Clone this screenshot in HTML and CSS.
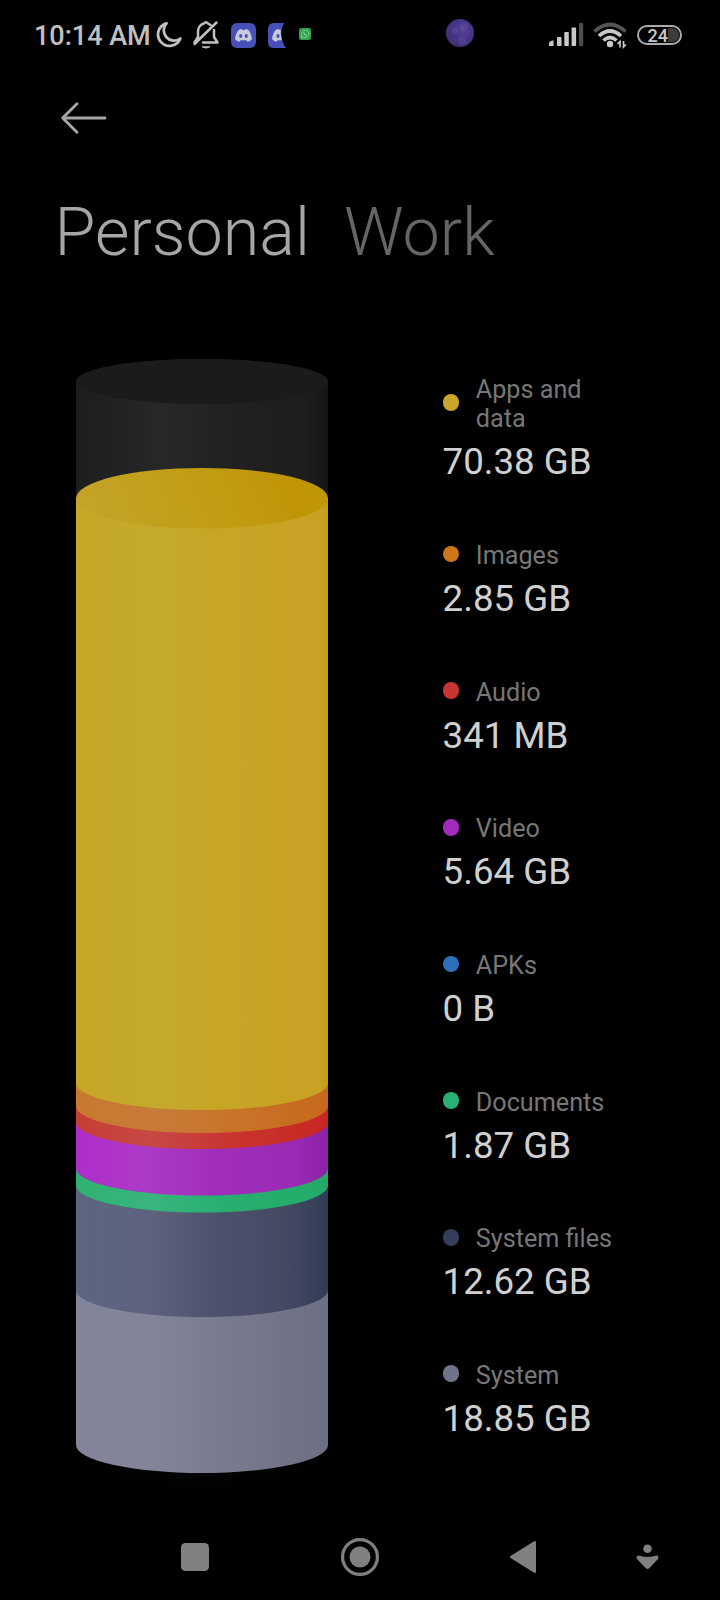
FILE: index.html
```html
<!DOCTYPE html>
<html lang="en">
<head>
<meta charset="utf-8">
<title>Storage</title>
<link rel="stylesheet" href="styles.css">
</head>
<body>
<header class="status">
  <span class="clock">10:14 AM</span>
  <svg class="moon" width="26" height="28" viewBox="0 0 26 28"><path d="M10.500 2.300A11.500 11.500 0 1 0 24.300 17.500A10.300 10.300 0 0 1 10.500 2.300Z" fill="none" stroke="#c0c0c0" stroke-width="2.800" stroke-linejoin="round"/></svg>
  <svg class="bell" width="28" height="30" viewBox="0 0 28 30" fill="none" stroke="#c0c0c0" stroke-width="2.500" stroke-linecap="round" stroke-linejoin="round"><path d="M6 17V11.500C6 7 9 4 12 3.500Q14 1 16 3.500L18.500 5M22 10V17L25.500 22.500H11M2.500 24L24.500 2.500M2.500 22.500L6 17"/><path d="M10.500 27Q14 29.300 17.500 27Z" fill="#c0c0c0" stroke-width="1"/></svg>
  <svg class="discord" width="25" height="25" viewBox="0 0 25 25"><rect width="25" height="25" rx="6" fill="#4750b8"/><path d="M8.500 6.500L10.500 6L11.300 7H13.700L14.500 6L17 6.700Q19.500 8 21 16Q19 18.700 16.500 18.800L15.300 17.300H9.700L8.500 18.800Q6 18.700 4 16Q5.200 8.500 8.500 6.500Z" fill="#c9cbd9"/><ellipse cx="9.700" cy="13" rx="1.600" ry="1.900" fill="#4750b8"/><ellipse cx="15.300" cy="13" rx="1.600" ry="1.900" fill="#4750b8"/></svg>
  <svg class="discord-cut" width="18" height="25" viewBox="0 0 18 25"><path d="M6 0H16Q12.500 7 13.500 14Q14.500 21 18 25H6Q0 25 0 19V6Q0 0 6 0Z" fill="#4750b8"/><path d="M12.800 6.800H11.300L10.500 6L8.500 6.500Q5.200 8.500 4 16Q6 18.700 8.500 18.800L9.700 17.300H13.800Q12.200 11 12.800 6.800Z" fill="#c9cbd9"/><ellipse cx="10" cy="13" rx="1.600" ry="1.900" fill="#4750b8"/></svg>
  <svg class="chat" width="12" height="12" viewBox="0 0 12 12"><rect width="12" height="12" rx="2.500" fill="#2fa04b"/><path d="M2.300 9.800L2.900 7.600A3.700 3.700 0 1 1 4.500 9.200Z" fill="none" stroke="#8fcc9d" stroke-width="0.900"/><path d="M4.700 4.200Q5 7 7.700 7.500" fill="none" stroke="#8fcc9d" stroke-width="1.200"/></svg>
  <svg class="camera" width="28" height="28" viewBox="0 0 28 28"><defs><radialGradient id="lens" cx=".6" cy=".4" r=".65"><stop offset="0" stop-color="#584197"/><stop offset=".6" stop-color="#453386"/><stop offset="1" stop-color="#40316f"/></radialGradient></defs><circle cx="14" cy="14" r="14" fill="url(#lens)"/><g fill="#7560a8" fill-opacity=".25"><circle cx="18" cy="8" r="4"/><circle cx="9" cy="12" r="3"/><circle cx="16" cy="22" r="4"/></g></svg>
  <svg class="signal" width="35" height="24" viewBox="0 0 35 24" fill="#c8c8c8"><path d="M0 23V20.500Q0 18 4.500 17.300V23Z"/><rect x="8" y="14" width="4.500" height="9" rx=".7"/><rect x="15.300" y="9" width="4.500" height="14" rx=".7"/><rect x="22.600" y="4.500" width="4.500" height="18.500" rx=".7"/><rect x="30" y="0" width="4.200" height="23" rx=".7" fill="#4e4e4e"/></svg>
  <svg class="wifi" width="35" height="27" viewBox="0 0 35 27" fill="none" stroke="#c8c8c8" stroke-width="3.600"><path d="M1.500 9.500Q17 -4.500 32.500 9.500" stroke="#555"/><path d="M6 14Q17 4 28 14"/><path d="M10.500 18.500Q17 12.500 23.500 18.500"/><circle cx="17" cy="22" r="3.200" fill="#c8c8c8" stroke="none"/><path d="M27 25.500V19.500L24.500 22M30.500 19V25L32.800 22.500" stroke-width="1.700"/></svg>
  <span class="battery"><span class="charge">24</span></span>
</header>

<div class="toolbar">
  <svg width="48" height="34" viewBox="0 0 48 34" fill="none" stroke="#a6a6a6" stroke-width="2.900" stroke-linecap="round" stroke-linejoin="round"><path d="M45 17H3M17 2.700L2.700 17L17 31.300"/></svg>
</div>

<nav class="tabs">
  <span class="tab active">Personal</span>
  <span class="tab">Work</span>
</nav>

<main class="storage">
  <svg class="cylinder" width="252" height="1130" viewBox="0 0 252 1130">
    <defs>
      <linearGradient id="glass"><stop offset="0" stop-color="#1d1d1d"/><stop offset=".35" stop-color="#282828"/><stop offset=".55" stop-color="#222"/><stop offset=".9" stop-color="#1e1e1e"/><stop offset="1" stop-color="#151515"/></linearGradient>
      <linearGradient id="apps"><stop offset="0" stop-color="#c5a824"/><stop offset=".35" stop-color="#c5a92d"/><stop offset=".55" stop-color="#c7a525"/><stop offset=".97" stop-color="#c8a224"/><stop offset="1" stop-color="#c49c1c"/></linearGradient>
      <linearGradient id="appsTop" x1="0" y1=".4" x2="1" y2=".3"><stop offset="0" stop-color="#c3a428"/><stop offset=".45" stop-color="#c19e15"/><stop offset=".85" stop-color="#bf9506"/><stop offset="1" stop-color="#bf9709"/></linearGradient>
      <linearGradient id="images"><stop offset="0" stop-color="#c77930"/><stop offset=".35" stop-color="#c77b38"/><stop offset=".6" stop-color="#c77429"/><stop offset="1" stop-color="#c7691c"/></linearGradient>
      <linearGradient id="audio"><stop offset="0" stop-color="#c53e34"/><stop offset=".3" stop-color="#c74845"/><stop offset=".6" stop-color="#c93531"/><stop offset="1" stop-color="#c72722"/></linearGradient>
      <linearGradient id="video"><stop offset="0" stop-color="#b12dcb"/><stop offset=".28" stop-color="#ab3bc7"/><stop offset=".55" stop-color="#a02eba"/><stop offset=".85" stop-color="#9b2bb5"/><stop offset="1" stop-color="#8c22a6"/></linearGradient>
      <linearGradient id="docs"><stop offset="0" stop-color="#2fb271"/><stop offset=".3" stop-color="#38b57d"/><stop offset=".6" stop-color="#28af6f"/><stop offset="1" stop-color="#22ab68"/></linearGradient>
      <linearGradient id="sysfiles"><stop offset="0" stop-color="#5c6680"/><stop offset=".3" stop-color="#5e627e"/><stop offset=".55" stop-color="#4e516c"/><stop offset=".85" stop-color="#444962"/><stop offset="1" stop-color="#303b54"/></linearGradient>
      <linearGradient id="system"><stop offset="0" stop-color="#828599"/><stop offset=".3" stop-color="#828599"/><stop offset=".6" stop-color="#787b8f"/><stop offset="1" stop-color="#6c6f81"/></linearGradient>
      <radialGradient id="shade"><stop offset="0" stop-color="#07090b"/><stop offset="1" stop-color="#000"/></radialGradient>
    </defs>
    <ellipse cx="126" cy="1098" rx="120" ry="31" fill="url(#shade)"/>
    <path d="M0 22.500A126 22.500 0 0 1 252 22.500V150H0Z" fill="url(#glass)"/>
    <ellipse cx="126" cy="22.500" rx="126" ry="22.500" fill="#1b1b1b"/>
    <path d="M0 139V1086A126 28 0 0 0 252 1086V139Z" fill="url(#system)"/>
    <path d="M0 139V931A126 27 0 0 0 252 931V139Z" fill="url(#sysfiles)"/>
    <path d="M0 139V826.500A126 27 0 0 0 252 826.500V139Z" fill="url(#docs)"/>
    <path d="M0 139V809.500A126 27 0 0 0 252 809.500V139Z" fill="url(#video)"/>
    <path d="M0 139V763A126 27 0 0 0 252 763V139Z" fill="url(#audio)"/>
    <path d="M0 139V747A126 27 0 0 0 252 747V139Z" fill="url(#images)"/>
    <path d="M0 139V724A126 27 0 0 0 252 724V139Z" fill="url(#apps)"/>
    <ellipse cx="126" cy="139.300" rx="126" ry="30.300" fill="url(#appsTop)"/>
  </svg>

  <ul class="legend">
    <li class="entry"><div class="label"><i class="dot apps"></i><span class="name">Apps and data</span></div><div class="value">70.38 GB</div></li>
    <li class="entry"><div class="label"><i class="dot images"></i><span class="name">Images</span></div><div class="value">2.85 GB</div></li>
    <li class="entry"><div class="label"><i class="dot audio"></i><span class="name">Audio</span></div><div class="value">341 MB</div></li>
    <li class="entry"><div class="label"><i class="dot video"></i><span class="name">Video</span></div><div class="value">5.64 GB</div></li>
    <li class="entry"><div class="label"><i class="dot apks"></i><span class="name">APKs</span></div><div class="value">0 B</div></li>
    <li class="entry"><div class="label"><i class="dot docs"></i><span class="name">Documents</span></div><div class="value">1.87 GB</div></li>
    <li class="entry"><div class="label"><i class="dot sysfiles"></i><span class="name">System files</span></div><div class="value">12.62 GB</div></li>
    <li class="entry"><div class="label"><i class="dot system"></i><span class="name">System</span></div><div class="value">18.85 GB</div></li>
  </ul>
</main>

<footer class="navbar">
  <svg class="recent" width="28" height="28" viewBox="0 0 28 28"><rect width="28" height="28" rx="4.500" fill="#808080"/></svg>
  <svg class="home" width="38" height="38" viewBox="0 0 38 38"><circle cx="19" cy="19" r="17.400" fill="none" stroke="#808080" stroke-width="3.200"/><circle cx="19" cy="19" r="10.500" fill="#808080"/></svg>
  <svg class="back" width="26" height="32" viewBox="0 0 26 32"><path d="M24.800 1.200V30.800L1.200 16Z" fill="#808080" stroke="#808080" stroke-width="2.400" stroke-linejoin="round"/></svg>
  <svg class="drop" width="23" height="26" viewBox="0 0 23 26" fill="#808080"><circle cx="11.500" cy="4.700" r="4.300"/><path d="M2 12.500Q11.500 15.500 21 12.500L21.500 14L12.500 23.500Q11.500 24.500 10.500 23.500L1.500 14Z" stroke="#808080" stroke-width="2" stroke-linejoin="round"/></svg>
</footer>
</body>
</html>
```

FILE: styles.css
```css
* { box-sizing: border-box; }

body {
  margin: 0;
  width: 720px;
  height: 1600px;
  overflow: hidden;
  background: #000;
  color: #d0d0d0;
  font-family: Roboto, "Liberation Sans", sans-serif;
  display: flex;
  flex-direction: column;
}

svg { display: block; flex: none; }

.status {
  display: flex;
  align-items: center;
  height: 70px;
  padding-left: 34px;
}
.clock {
  width: 122px;
  padding-top: 2px;
  font-size: 27px;
  font-weight: 500;
  line-height: 32px;
  color: #c0c0c0;
  white-space: nowrap;
}
.bell { margin-left: 10px; }
.discord { margin-left: 11px; }
.discord-cut { margin-left: 12px; }
.chat { margin: -3px 0 0 13px; }
.camera { margin: -4px 0 0 135px; }
.signal { margin-left: 75px; }
.wifi { margin-left: 9px; }
.battery {
  width: 45px;
  height: 20px;
  margin-left: 9px;
  padding: 1px;
  border: 2px solid #aaa;
  border-radius: 10px;
}
.charge {
  display: block;
  height: 14px;
  padding-left: 7.500px;
  border-radius: 7px;
  background: linear-gradient(90deg, #000 28px, #3c3c3c 28px);
  font-size: 18px;
  font-weight: 500;
  line-height: 16px;
  color: #c8c8c8;
}

.toolbar {
  height: 97px;
  padding: 31px 0 0 60px;
}

.tabs {
  display: flex;
  gap: 34px;
  height: 192px;
  padding: 25px 0 0 54.500px;
}
.tab {
  font-size: 66.500px;
  font-weight: 300;
  line-height: 81px;
  color: #656565;
}
.active { color: #a6a6a6; }

.storage {
  display: flex;
  height: 1155px;
  padding-left: 76px;
}
.legend {
  list-style: none;
  margin: 0;
  padding: 16.200px 0 0 114.600px;
}
.entry { margin-bottom: 57.600px; }
.label {
  display: flex;
  align-items: center;
  gap: 16.500px;
  width: 177px;
}
.name {
  flex: 1;
  font-size: 25.200px;
  line-height: 29.300px;
  color: #777;
}
.dot {
  width: 16.700px;
  height: 16.700px;
  margin-bottom: 3.800px;
  border-radius: 50%;
}
.value {
  margin-top: 6.600px;
  font-size: 36.700px;
  line-height: 43.170px;
  color: #d0d0d0;
  white-space: nowrap;
}
.dot.apps { background: #c9a52a; }
.dot.images { background: #cc7519; }
.dot.audio { background: #c93632; }
.dot.video { background: #a42bbd; }
.dot.apks { background: #2e70bd; }
.dot.docs { background: #28b075; }
.dot.sysfiles { background: #343d59; }
.dot.system { background: #70748b; }

.navbar {
  display: flex;
  align-items: center;
  height: 84px;
  padding: 1px 0 0 181px;
}
.home { margin-left: 132px; }
.back { margin-left: 131px; }
.drop { margin-left: 99.500px; }
```
